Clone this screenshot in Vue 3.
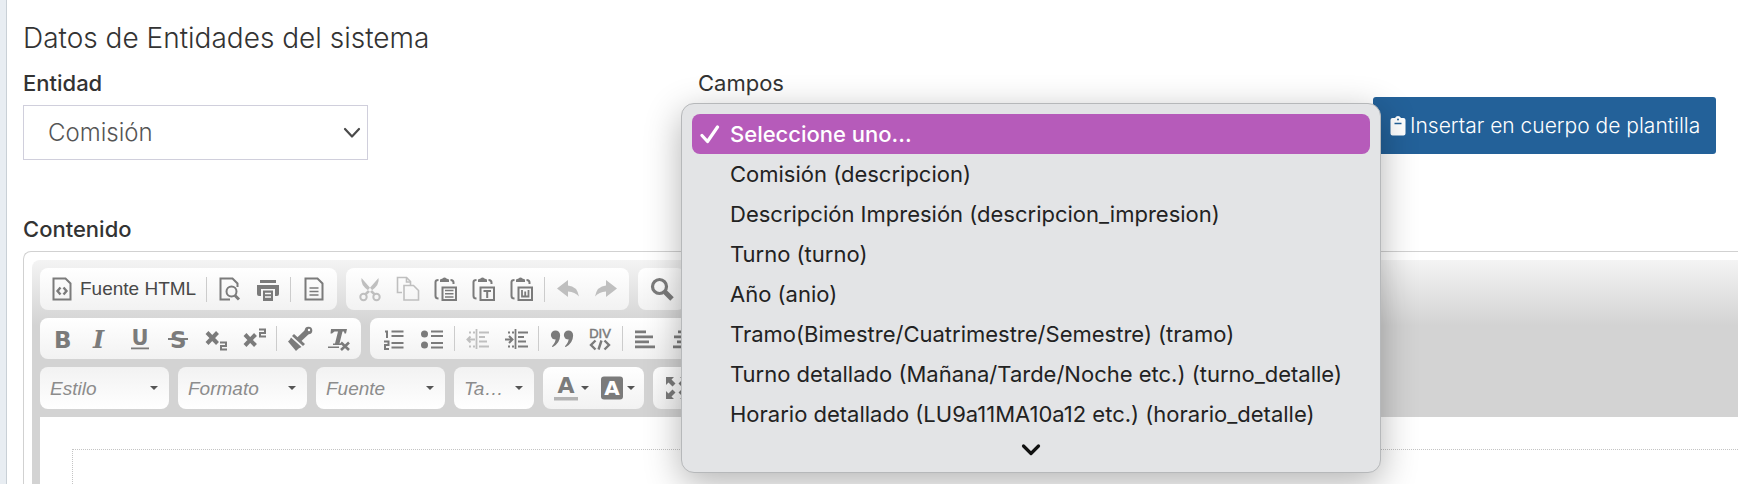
<script setup>
import { ref } from 'vue'

const campos = [
  'Seleccione uno...',
  'Comisión (descripcion)',
  'Descripción Impresión (descripcion_impresion)',
  'Turno (turno)',
  'Año (anio)',
  'Tramo(Bimestre/Cuatrimestre/Semestre) (tramo)',
  'Turno detallado (Mañana/Tarde/Noche etc.) (turno_detalle)',
  'Horario detallado (LU9a11MA10a12 etc.) (horario_detalle)',
]
const selected = ref(0)

const sans = 'font-family="DejaVu Sans, sans-serif" font-weight="bold" fill="currentColor"'
const stroke = (width) => `fill="none" stroke="currentColor" stroke-width="${width}"`
const page = `<path ${stroke(2)} d="M3.500 1.500h12l5 5v16h-17z"/>`
const clip = `<path ${stroke(2)} d="M4.500 3q-3 0-3 2v14q0 2.500 3 2.500M16.500 3q3 0 3 2.500v1.500"/><path fill="currentColor" d="M6 5V2.500l2.500-1Q10.500-.5 12.500 1.500l2.500 1V5z"/><path ${stroke(2)} d="M8.500 10.500h13.500v12.500h-13.500z"/>`

const icons = {
  source: page + `<path ${stroke(2.4)} d="M10.500 10.500L7.500 14l3 3.500M13.500 10.500l3 3.500-3 3.500"/>`,
  preview: `<path ${stroke(2)} d="M12 22.500H2.500v-21h12l5 5V10"/><circle cx="13.500" cy="14.500" r="5" ${stroke(2)}/><path ${stroke(3)} d="M17 18.500l4 4"/>`,
  print: `<path fill="currentColor" d="M4 3h16v3H4zM1 8h22v9q0 2-2 2h-2v-7H5v7H3q-2 0-2-2z"/><path fill="currentColor" d="M7 13.500h10V24H7z"/><path stroke="#fafafa" stroke-width="1.500" d="M9 16.500h6M9 20h6"/>`,
  doc: page + `<path ${stroke(1.6)} d="M7.500 11h9M7.500 14.500h9M7.500 18h9"/>`,
  cut: `<path fill="currentColor" d="M3.500 1L14 13l4 4-2 1.500-5-4.500Q2 8 3.500 1zM20.500 1L10 13l-4 4 2 1.500 5-4.500Q22 8 20.500 1z"/><circle cx="5.500" cy="20" r="3.200" ${stroke(2)}/><circle cx="18.500" cy="20" r="3.200" ${stroke(2)}/>`,
  copy: `<path ${stroke(1.6)} d="M6 15.500H1.500v-15h9l4 4V8M8 8.500h9.500l5 5V23H8z"/><path ${stroke(1.6)} d="M10.500.5V5h4"/>`,
  paste: clip + `<path ${stroke(1.6)} d="M11 13.500h8.500M11 16.800h8.500M11 20h8.500"/>`,
  pasteText: clip + `<path ${stroke(2)} d="M11.500 14h7.500M15.200 14V21"/>`,
  pasteWord: clip + `<path ${stroke(1.8)} d="M12 13v6.500h6.500V13M15.200 14.500v5"/>`,
  undo: `<path fill="currentColor" d="M1 11.500L12 3v5.500q9 .5 11 11Q19 15 12 14.500V20z"/>`,
  redo: `<path fill="currentColor" d="M23 11.500L12 3v5.500q-9 .5-11 11Q5 15 12 14.500V20z"/>`,
  find: `<circle cx="9.500" cy="9.500" r="7" ${stroke(3.2)}/><path ${stroke(5)} d="M15 15l7 7"/>`,
  bold: `<text x="2" y="21" font-size="23" ${sans}>B</text>`,
  italic: `<text x="3" y="21" font-size="24" font-style="italic" font-family="DejaVu Serif, serif" font-weight="bold" fill="currentColor">I</text>`,
  underline: `<text x="3.500" y="17.500" font-size="21" ${sans}>U</text><path fill="currentColor" d="M3 20.500h18v1.800H3z"/>`,
  strike: `<text x="4" y="20.500" font-size="23" ${sans}>S</text><path fill="currentColor" d="M2 11h20v2H2z"/>`,
  sub: `<path ${stroke(4)} d="M3 5.500l10.500 11M13.500 5.500L3 16.500"/><path ${stroke(2)} d="M16 15.500h6v3.500h-5v3.500h6"/>`,
  sup: `<path ${stroke(4)} d="M3 7.500l10.500 11M13.500 7.500L3 18.500"/><path ${stroke(2)} d="M17 2.500h6V6h-5v3.500h6"/>`,
  brush: `<path fill="currentColor" d="M6 7l11 10-2 2L4 9zM3 10.500l10.500 9.500q-3 1-5.500 4L0 14.500q2-1.500 3-4z"/><path ${stroke(5.5)} d="M10.500 13L19.500 4.500"/><circle cx="20.500" cy="3.500" r="3.800" fill="currentColor"/><circle cx="21" cy="3" r="1.200" fill="#fff"/>`,
  clear: `<path fill="currentColor" d="M5 2h16l-1 4.500h-1.500l-.5-2h-1.500l-3 12h2V18H7v-1.500h2l3-12H8.500L6 6.500H4.500zM2 19.500h11V21H2z"/><path ${stroke(2.6)} d="M15 15.500l8 7.500M23 15.500L15 23"/>`,
  ordered: `<path ${stroke(1.8)} d="M9.500 4.500h12M9.500 9h12M9.500 16h12M9.500 20.500h12"/><path ${stroke(2)} d="M3 4.500h2V11M2 14.500h4.500V18H3v4h4"/>`,
  bullets: `<circle cx="4.500" cy="7" r="3.500" fill="currentColor"/><circle cx="4.500" cy="18" r="3.500" fill="currentColor"/><path ${stroke(1.8)} d="M11 4.500h12M11 9h12M11 16h12M11 20.500h12"/>`,
  outdent: `<path ${stroke(1.8)} d="M10.500 2v20"/><path ${stroke(2)} d="M13 5.500h10M13 10h6M13 14.500h8M13 19.500h10M1 12.500h8M4.500 9.500l-3 3 3 3"/><path ${stroke(2)} stroke-dasharray="2 2" d="M3 5.500h6M3 19.500h6"/>`,
  indent: `<path ${stroke(1.8)} d="M11.500 2v20"/><path ${stroke(2)} d="M14 5.500h10M14 10h6M14 14.500h8M14 19.500h10M1 12.500h8M5 9l3.500 3.500L5 16"/><path ${stroke(2)} stroke-dasharray="2 2" d="M4 5.500h6M4 19.500h6"/>`,
  quote: `<g fill="currentColor"><circle cx="5.500" cy="8" r="4.600"/><path d="M10.100 8q0 8-7.300 12-1 0-.8-.8Q6 15 6 10z"/><circle cx="18.500" cy="8" r="4.600"/><path d="M23.100 8q0 8-7.300 12-1 0-.8-.8Q19 15 19 10z"/></g>`,
  div: `<text x="12" y="10.500" font-size="13" text-anchor="middle" font-family="Liberation Sans, sans-serif" stroke="currentColor" stroke-width="0.500" fill="currentColor">DIV</text><path ${stroke(2.4)} d="M7.500 13.500L3 18l4.500 4.500M16.500 13.500l4.500 4.500-4.500 4.500M13.500 13.500l-3 9"/>`,
  left: `<path fill="currentColor" d="M1 3.500h11v2.800H1zM1 8.500h18v2.800H1zM1 13.500h14v2.800H1zM1 18.500h20v2.800H1z"/>`,
  center: `<path fill="currentColor" d="M6 3.500h12v2.800H6zM2 8.500h20v2.800H2zM5 13.500h14v2.800H5zM1 18.500h22v2.800H1z"/>`,
  color: `<text x="12" y="17" font-size="22" text-anchor="middle" ${sans}>A</text><path fill="#b4b4b4" d="M0 21h24v3.500H0z"/>`,
  background: `<rect x="1" y="0.500" width="22" height="23" rx="3" fill="currentColor"/><text x="12" y="19" font-size="20" text-anchor="middle" font-family="DejaVu Sans, sans-serif" font-weight="bold" fill="#fff">A</text>`,
  maximize: `<path fill="currentColor" d="M1 1h8L6.500 3.500l4 4-3 3-4-4L1 9zM23 1v8l-2.500-2.500-4 4-3-3 4-4L15 1zM1 23v-8l2.500 2.500 4-4 3 3-4 4L9 23zM23 23h-8l2.500-2.500-4-4 3-3 4 4L23 15z"/>`,
}

const rows = [
  [
    [
      { i: 'source', t: 'Fuente HTML' }, { sep: true },
      { i: 'preview', t: 'Vista previa' }, { i: 'print', t: 'Imprimir' }, { sep: true },
      { i: 'doc', t: 'Plantillas' },
    ],
    [
      { i: 'cut', t: 'Cortar', off: true }, { i: 'copy', t: 'Copiar', off: true },
      { i: 'paste', t: 'Pegar' }, { i: 'pasteText', t: 'Pegar como texto' },
      { i: 'pasteWord', t: 'Pegar desde Word' }, { sep: true },
      { i: 'undo', t: 'Deshacer', off: true }, { i: 'redo', t: 'Rehacer', off: true },
    ],
    [{ i: 'find', t: 'Buscar' }],
  ],
  [
    [
      { i: 'bold', t: 'Negrita' }, { i: 'italic', t: 'Cursiva' }, { i: 'underline', t: 'Subrayado' },
      { i: 'strike', t: 'Tachado' }, { i: 'sub', t: 'Subíndice' }, { i: 'sup', t: 'Superíndice' },
      { sep: true }, { i: 'brush', t: 'Copiar formato' }, { i: 'clear', t: 'Eliminar formato' },
    ],
    [
      { i: 'ordered', t: 'Lista numerada' }, { i: 'bullets', t: 'Lista con viñetas' }, { sep: true },
      { i: 'outdent', t: 'Disminuir sangría', off: true }, { i: 'indent', t: 'Aumentar sangría' }, { sep: true },
      { i: 'quote', t: 'Cita' }, { i: 'div', t: 'Contenedor DIV' }, { sep: true },
      { i: 'left', t: 'Alinear a la izquierda' }, { i: 'center', t: 'Centrado' },
    ],
  ],
]
const combos = [
  { label: 'Estilo' },
  { label: 'Formato' },
  { label: 'Fuente' },
  { label: 'Ta…', narrow: true },
]
</script>

<template>
  <main class="page">
    <section class="panel">
      <h2 class="title">Datos de Entidades del sistema</h2>

      <div class="fields">
        <div class="field">
          <label class="label" for="entidad">Entidad</label>
          <div class="select">
            <select id="entidad"><option>Comisión</option></select>
            <svg class="chevron" viewBox="0 0 18 12" aria-hidden="true">
              <path d="M2 2l7 7.500L16 2" fill="none" stroke="#4a4a4a" stroke-width="2.200" stroke-linecap="round" stroke-linejoin="round" />
            </svg>
          </div>
        </div>

        <div class="field">
          <span id="campos-label" class="label medium">Campos</span>
          <div class="menu" role="listbox" aria-labelledby="campos-label">
            <button
              v-for="(c, n) in campos"
              :key="c"
              type="button"
              role="option"
              class="option"
              :class="{ active: n === selected }"
              :aria-selected="n === selected"
              @click="selected = n"
            >
              <svg class="check" viewBox="0 0 20 20" aria-hidden="true">
                <path v-if="n === selected" d="M2 11.500l5.500 6L17.500 3" fill="none" stroke="#fff" stroke-width="3.200" stroke-linecap="round" stroke-linejoin="round" />
              </svg>
              <span>{{ c }}</span>
            </button>
            <svg class="more" viewBox="0 0 20 14" aria-hidden="true">
              <path d="M2.500 3l7.500 7.500L17.500 3" fill="none" stroke="#111" stroke-width="3.200" stroke-linecap="round" stroke-linejoin="round" />
            </svg>
          </div>
        </div>

        <div class="field">
          <button type="button" class="insert">
            <svg viewBox="0 0 16 20" aria-hidden="true">
              <path d="M2.500 2H5Q6 0 8 0t3 2h2.500Q15.500 2 15.500 4v13.500q0 2-2 2h-11q-2 0-2-2V4q0-2 2-2z" fill="#fff" />
              <circle cx="8" cy="3.500" r="1" fill="#236199" />
              <path d="M4.500 7.500h7" stroke="#236199" stroke-width="1.500" />
            </svg>
            <span>Insertar en cuerpo de plantilla</span>
          </button>
        </div>
      </div>

      <span class="label">Contenido</span>
      <div class="editor">
        <div class="chrome">
          <div class="toolbar">
            <div v-for="(row, r) in rows" :key="r" class="row">
              <div v-for="(group, g) in row" :key="g" class="group">
                <template v-for="(b, k) in group" :key="k">
                  <span v-if="b.sep" class="sep"></span>
                  <button v-else type="button" class="tool" :class="{ wide: b.i === 'source' }" :disabled="b.off" :aria-label="b.t">
                    <svg class="icon" viewBox="0 0 24 24" aria-hidden="true" v-html="icons[b.i]"></svg>
                    <span v-if="b.i === 'source'">{{ b.t }}</span>
                  </button>
                </template>
              </div>
            </div>
            <div class="row">
              <div v-for="c in combos" :key="c.label" class="combo" :class="{ narrow: c.narrow }">
                <select :aria-label="c.label"><option>{{ c.label }}</option></select>
                <span class="arrow"></span>
              </div>
              <div class="group">
                <button type="button" class="tool drop" aria-label="Color de texto">
                  <svg class="icon" viewBox="0 0 24 24" aria-hidden="true" v-html="icons.color"></svg>
                  <span class="arrow"></span>
                </button>
                <button type="button" class="tool drop" aria-label="Color de fondo">
                  <svg class="icon" viewBox="0 0 24 24" aria-hidden="true" v-html="icons.background"></svg>
                  <span class="arrow"></span>
                </button>
              </div>
              <div class="group">
                <button type="button" class="tool" aria-label="Maximizar">
                  <svg class="icon" viewBox="0 0 24 24" aria-hidden="true" v-html="icons.maximize"></svg>
                </button>
              </div>
            </div>
          </div>
          <div class="content"><div class="sheet"></div></div>
        </div>
      </div>
    </section>
  </main>
</template>

<style>
body {
  margin: 0;
}
</style>

<style scoped>
.page {
  box-sizing: border-box;
  display: flex;
  height: 100vh;
  overflow: hidden;
  padding-left: 6px;
  background: #e8edf2;
  font-family: Inter, "Liberation Sans", sans-serif;
  color: #333;
}
.panel {
  flex: 1;
  min-width: 0;
  display: flex;
  flex-direction: column;
  box-sizing: border-box;
  padding: 22px 0 0 16px;
  border-left: 1px solid #c9d0d6;
  background: #fff;
}
.title {
  margin: 0 0 16px;
  font-size: 28px;
  line-height: 32px;
  font-weight: 300;
}
.fields {
  display: grid;
  grid-template-columns: 1fr 1fr 365px;
  height: 146px;
}
.field {
  position: relative;
}
.label {
  display: block;
  font-size: 22px;
  line-height: 26px;
  font-weight: 500;
}
.medium {
  font-weight: 400;
}
.select {
  display: grid;
  align-items: center;
  width: 345px;
  margin-top: 9px;
}
.select select {
  grid-area: 1 / 1;
  appearance: none;
  box-sizing: border-box;
  height: 55px;
  padding: 0 24px;
  border: 1px solid #d0cfdc;
  border-radius: 0;
  background: #fff;
  color: #555;
  font: 300 24px Inter, "Liberation Sans", sans-serif;
}
.chevron {
  grid-area: 1 / 1;
  justify-self: end;
  width: 18px;
  height: 12px;
  margin-right: 7px;
  pointer-events: none;
}
.menu {
  position: absolute;
  z-index: 2;
  top: 33px;
  left: -17px;
  right: -8px;
  box-sizing: border-box;
  display: flex;
  flex-direction: column;
  padding: 10px 10px 15px;
  border: 1px solid #b6b8ba;
  border-radius: 13px;
  background: #e3e4e6;
  box-shadow: 0 10px 36px rgba(0, 0, 0, 0.3);
}
.option {
  display: flex;
  align-items: center;
  gap: 10px;
  height: 40px;
  padding: 0 8px;
  border: 0;
  border-radius: 8px;
  background: none;
  color: #222;
  font: 400 22px Inter, "Liberation Sans", sans-serif;
  white-space: nowrap;
}
.active {
  background: #b65bba;
  color: #fff;
  font-weight: 500;
}
.check {
  width: 20px;
  height: 20px;
}
.more {
  align-self: center;
  width: 20px;
  height: 14px;
  margin-top: 9px;
}
.insert {
  display: flex;
  align-items: center;
  gap: 4px;
  width: 343px;
  height: 57px;
  margin-top: 27px;
  padding: 0 0 0 17px;
  border: 0;
  border-radius: 3px;
  background: #236199;
  color: #fff;
  font: 300 21px Inter, "Liberation Sans", sans-serif;
  white-space: nowrap;
}
.insert svg {
  width: 16px;
  height: 20px;
}
.editor {
  flex: 1;
  display: flex;
  margin-top: 9px;
  padding: 8px 0 0 8px;
  border: 1px solid #d1d1d1;
  border-width: 1px 0 0 1px;
  border-radius: 8px 0 0 0;
}
.chrome {
  flex: 1;
  display: flex;
  flex-direction: column;
  padding: 8px 0 0 8px;
  border-radius: 8px 0 0 0;
  background: #d3d3d3 linear-gradient(#f4f4f4, #d3d3d3) 0 0 / 100% 66px no-repeat;
}
.toolbar {
  display: flex;
  flex-direction: column;
  gap: 8px;
  padding-bottom: 8px;
}
.row {
  display: flex;
  gap: 9px;
}
.group,
.combo {
  display: flex;
  align-items: center;
  box-sizing: border-box;
  height: 42px;
  border-radius: 8px;
}
.row:nth-child(2) .group {
  height: 41px;
}
.group {
  padding: 0 4px 0 5px;
  background: linear-gradient(#fff, #f2f2f2);
}
.sep {
  width: 1px;
  height: 25px;
  margin: 0 4px 0 3px;
  background: #ccc;
}
.tool {
  display: flex;
  align-items: center;
  justify-content: center;
  width: 38px;
  height: 40px;
  padding: 0;
  border: 0;
  background: none;
  color: #7b7b7b;
}
.tool:disabled {
  color: #bfbfbf;
}
.wide {
  justify-content: flex-start;
  gap: 6px;
  width: 158px;
  padding-left: 5px;
  font: 19px "Liberation Sans", Arial, sans-serif;
}
.wide span {
  color: #484848;
}
.icon {
  flex: none;
  width: 24px;
  height: 24px;
  overflow: visible;
}
.drop {
  gap: 3px;
  width: 46px;
}
.arrow {
  width: 0;
  height: 0;
  border: 4px solid transparent;
  border-top-color: #555;
  border-bottom-width: 0;
}
.combo {
  display: grid;
  width: 129px;
  background: linear-gradient(#f2f2f2, #fff);
}
.combo select {
  grid-area: 1 / 1;
  appearance: none;
  width: 100%;
  height: 42px;
  padding: 0 0 0 10px;
  border: 0;
  background: none;
  color: #8c8c8c;
  font: italic 19px "Liberation Sans", Arial, sans-serif;
}
.combo .arrow {
  grid-area: 1 / 1;
  justify-self: end;
  margin-right: 11px;
  pointer-events: none;
}
.combo.narrow {
  width: 80px;
}
.content {
  flex: 1;
  display: flex;
  padding: 32px 0 0 32px;
  background: #fff;
}
.sheet {
  flex: 1;
  border: 1px dotted #c4c4c4;
  border-width: 1px 0 0 1px;
}
</style>
